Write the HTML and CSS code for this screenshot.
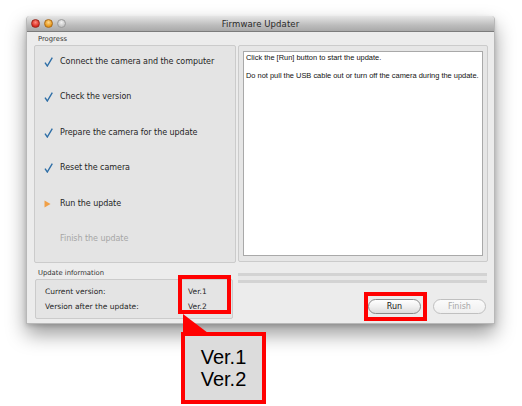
FILE: index.html
```html
<!DOCTYPE html>
<html>
<head>
<meta charset="utf-8">
<link rel="stylesheet" href="styles.css">
</head>
<body>
<div class="window">
  <div class="titlebar">
    <div class="lights">
      <span class="light red"></span>
      <span class="light orange"></span>
      <span class="light gray"></span>
    </div>
    <div class="title">Firmware Updater</div>
  </div>
  <div class="content">
    <div class="top">
      <div class="col">
        <div class="group-label">Progress</div>
        <div class="steps">
          <div class="step"><span class="mark"><svg width="9" height="10" viewBox="0 0 9 10"><path d="M1 5.6 L3.3 9 L8.3 0.6" fill="none" stroke="#2f6fa7" stroke-width="1.4"/></svg></span>Connect the camera and the computer</div>
          <div class="step"><span class="mark"><svg width="9" height="10" viewBox="0 0 9 10"><path d="M1 5.6 L3.3 9 L8.3 0.6" fill="none" stroke="#2f6fa7" stroke-width="1.4"/></svg></span>Check the version</div>
          <div class="step"><span class="mark"><svg width="9" height="10" viewBox="0 0 9 10"><path d="M1 5.6 L3.3 9 L8.3 0.6" fill="none" stroke="#2f6fa7" stroke-width="1.4"/></svg></span>Prepare the camera for the update</div>
          <div class="step"><span class="mark"><svg width="9" height="10" viewBox="0 0 9 10"><path d="M1 5.6 L3.3 9 L8.3 0.6" fill="none" stroke="#2f6fa7" stroke-width="1.4"/></svg></span>Reset the camera</div>
          <div class="step"><span class="mark"><svg width="7" height="8" viewBox="0 0 7 8"><path d="M0.5 0.5 L6.5 4 L0.5 7.5 Z" fill="#f0a048"/></svg></span>Run the update</div>
          <div class="step disabled"><span class="mark"></span>Finish the update</div>
        </div>
      </div>
      <div class="col">
        <div class="group-label">&nbsp;</div>
        <div class="msg-panel">
          <div class="msg">
            <p>Click the [Run] button to start the update.</p>
            <p>Do not pull the USB cable out or turn off the camera during the update.</p>
          </div>
        </div>
      </div>
    </div>
    <div class="bottom">
      <div class="col">
        <div class="group-label">Update information</div>
        <div class="info">
          <div class="info-row"><span class="info-key">Current version:</span><span class="info-val">Ver.1</span></div>
          <div class="info-row"><span class="info-key">Version after the update:</span><span class="info-val">Ver.2</span></div>
        </div>
      </div>
      <div class="col right-bottom">
        <div class="progress"></div>
        <div class="buttons">
          <button class="btn">Run</button>
          <button class="btn off">Finish</button>
        </div>
      </div>
    </div>
  </div>
</div>

<div class="hl hl-ver"></div>
<div class="hl hl-run"></div>
<svg class="pointer" width="28" height="20" viewBox="0 0 28 20"><polygon points="1,0 1,19 26,19" fill="#ff0000"/></svg>
<div class="callout">
  <div>Ver.1</div>
  <div>Ver.2</div>
</div>
</body>
</html>
```
FILE: styles.css
```css
html, body {
  margin: 0;
  padding: 0;
  background: #ffffff;
}
body {
  width: 522px;
  height: 406px;
  position: relative;
  overflow: hidden;
  font-family: "DejaVu Sans", "Liberation Sans", sans-serif;
  color: #1e1e1e;
}
.window {
  margin: 16px 0 0 26px;
  width: 469px;
  height: 308px;
  background: #ececec;
  border: 1px solid #b8b8b8;
  border-top: none;
  box-sizing: border-box;
  border-radius: 4px 4px 0 0;
  box-shadow: 0 10px 20px rgba(0, 0, 0, 0.4), 0 2px 4px rgba(0,0,0,0.15);
}
.titlebar {
  height: 16px;
  background: linear-gradient(#e6e6e6, #bdbdbd 60%, #a9a9a9);
  border-bottom: 1px solid #7c7c7c;
  border-radius: 4px 4px 0 0;
  position: relative;
  display: flex;
  align-items: center;
  justify-content: center;
  box-sizing: border-box;
}
.lights {
  position: absolute;
  left: 4px;
  top: 3px;
  display: flex;
  gap: 4px;
}
.light {
  width: 9px;
  height: 9px;
  border-radius: 50%;
  box-sizing: border-box;
}
.light.red { background: radial-gradient(circle at 50% 35%, #ff8d80, #d8261c 70%); border: 1px solid #9a2a20; }
.light.orange { background: radial-gradient(circle at 50% 35%, #ffd68a, #e69412 70%); border: 1px solid #a8691b; }
.light.gray { background: radial-gradient(circle at 50% 35%, #f2f2f2, #c4c4c4 70%); border: 1px solid #9a9a9a; }
.title {
  font-size: 8.5px;
  color: #2a2a2a;
  letter-spacing: 0.1px;
}
.content {
  padding: 0 6px 0 7px;
}
.top {
  display: grid;
  grid-template-columns: 202px 250px;
  gap: 2px;
}
.group-label {
  font-size: 6.8px;
  color: #333;
  height: 13px;
  line-height: 12px;
  padding-left: 4px;
  box-sizing: border-box;
  padding-top: 1px;
}
.steps {
  height: 218px;
  background: #e4e4e4;
  border: 1px solid #cbcbcb;
  border-radius: 2px;
  box-sizing: border-box;
  padding-top: 10px;
}
.step {
  height: 35.4px;
  display: flex;
  align-items: flex-start;
  font-size: 8px;
  line-height: 12px;
  color: #1f1f1f;
  letter-spacing: -0.05px;
}
.step.disabled { color: #a6a6a6; }
.mark {
  width: 16px;
  margin-left: 9px;
  display: flex;
  align-items: center;
  height: 12px;
}
.msg-panel {
  height: 217px;
  background: #e6e6e6;
  border: 1px solid #cbcbcb;
  border-radius: 2px;
  box-sizing: border-box;
  padding: 5px 4px 5px 4px;
}
.msg {
  height: 100%;
  background: #ffffff;
  border: 1px solid #a9a9a9;
  box-sizing: border-box;
  padding: 1px 2px;
  font-family: "Liberation Sans", Arial, sans-serif;
  font-size: 7.45px;
  color: #111;
}
.msg p {
  margin: 0 0 9px 0;
  line-height: 9px;
}
.bottom {
  display: grid;
  grid-template-columns: 202px 250px;
  gap: 2px;
  margin-top: 3px;
}
.info {
  width: 198px;
  height: 40px;
  background: #e4e4e4;
  border: 1px solid #cbcbcb;
  border-radius: 2px;
  box-sizing: border-box;
  padding: 5px 0 0 9px;
  margin-left: 1px;
}
.info-row {
  display: flex;
  font-size: 7.5px;
  height: 15px;
  line-height: 14px;
  color: #1f1f1f;
}
.info-key { width: 143px; }
.right-bottom {
  padding-top: 7px;
}
.progress {
  height: 10px;
  border-top: 3px solid #d3d3d3;
  border-bottom: 3px solid #d3d3d3;
  background: #e8e8e8;
  box-sizing: border-box;
  margin-right: 1px;
}
.buttons {
  display: flex;
  justify-content: flex-end;
  gap: 12px;
  margin-top: 16px;
  padding-right: 2px;
}
.btn {
  width: 53px;
  height: 15px;
  padding: 0;
  border-radius: 8px;
  border: 1px solid #8a8a8a;
  background: linear-gradient(#ffffff, #f0f0f0 50%, #dcdcdc);
  font-family: "DejaVu Sans", sans-serif;
  font-size: 8px;
  color: #1a1a1a;
  line-height: 12px;
}
.btn.off {
  border-color: #c0c0c0;
  color: #a8a8a8;
  background: linear-gradient(#fbfbfb, #efefef);
}
.hl {
  position: absolute;
  border: 4px solid #ff0000;
  box-sizing: border-box;
}
.hl-ver {
  left: 178px;
  top: 275px;
  width: 53px;
  height: 39px;
}
.hl-run {
  left: 364px;
  top: 292px;
  width: 63px;
  height: 29px;
}
.pointer {
  position: absolute;
  left: 182px;
  top: 314px;
}
.callout {
  position: absolute;
  left: 181px;
  top: 332px;
  width: 85px;
  height: 72px;
  border: 4px solid #ff0000;
  background: #dcdcdc;
  box-sizing: border-box;
  display: flex;
  flex-direction: column;
  align-items: center;
  justify-content: center;
  font-family: "Liberation Sans", Arial, sans-serif;
  font-size: 20px;
  line-height: 22px;
  color: #000;
}
```
